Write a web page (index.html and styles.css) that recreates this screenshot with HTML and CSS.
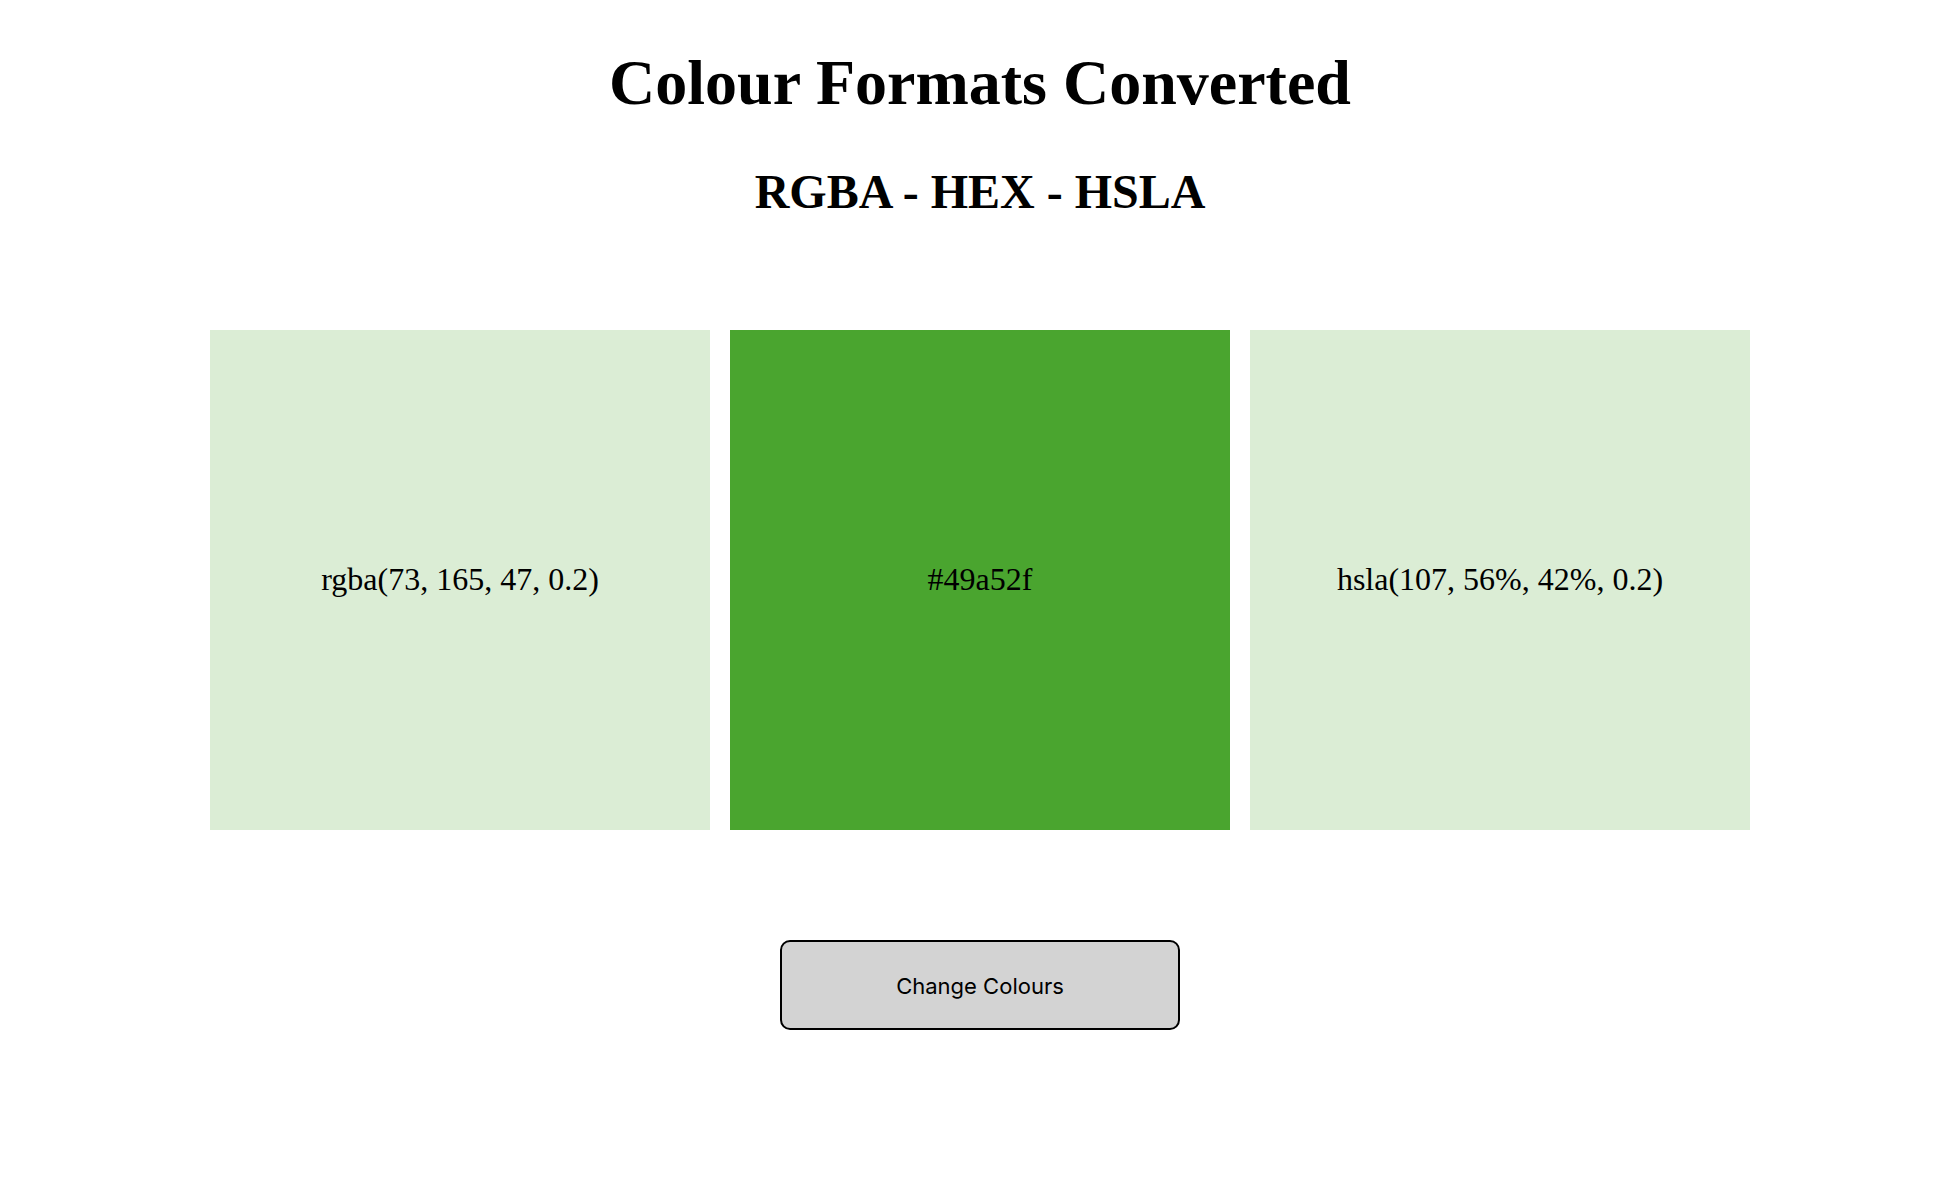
FILE: index.html
```html
<!DOCTYPE html>
<html lang="en-GB">
<head>
  <meta charset="utf-8">
  <title>Colour Formats Converted</title>
  <link rel="stylesheet" href="styles.css">
</head>
<body>
  <header class="header">
    <h1 class="title">Colour Formats Converted</h1>
    <h2 class="subtitle">RGBA - HEX - HSLA</h2>
  </header>
  <main class="main">
    <div class="swatches">
      <div class="swatch swatch-rgba">rgba(73, 165, 47, 0.2)</div>
      <div class="swatch swatch-hex">#49a52f</div>
      <div class="swatch swatch-hsla">hsla(107, 56%, 42%, 0.2)</div>
    </div>
    <button class="change" type="button">Change Colours</button>
  </main>
</body>
</html>
```
FILE: styles.css
```css
body {
  margin: 0;
  padding-left: 6px;
  background: #fff;
  color: #000;
  font-family: "Liberation Serif", "Times New Roman", serif;
}

.header {
  padding-top: 46px;
  text-align: center;
}

.title {
  margin: 0;
  font-size: 64px;
  line-height: 74px;
}

.subtitle {
  margin: 44px 0 0;
  font-size: 48px;
  line-height: 56px;
}

.main {
  display: flex;
  flex-direction: column;
  align-items: center;
  padding: 110px 16px;
}

.swatches {
  display: flex;
  flex-wrap: wrap;
  justify-content: center;
  gap: 20px;
}

.swatch {
  box-sizing: border-box;
  display: flex;
  align-items: center;
  justify-content: center;
  width: 500px;
  height: 500px;
  padding-bottom: 2px;
  font-size: 32px;
}

.swatch-rgba {
  background: #dbedd5;
}

.swatch-hex {
  background: #4aa52f;
}

.swatch-hsla {
  background: #dbedd5;
}

.change {
  width: 400px;
  height: 90px;
  margin-top: 110px;
  padding: 2px 0 0;
  border: 2px solid #000;
  border-radius: 10px;
  background: #d3d3d3;
  color: #000;
  font-family: Inter, sans-serif;
  font-size: 22px;
}
```
